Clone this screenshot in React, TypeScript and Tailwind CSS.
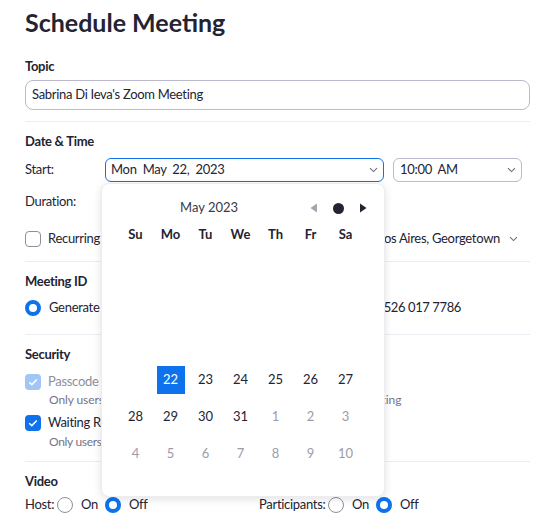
import React from "react";

const ink = "text-[#232333]";

function Chevron({ className = "" }: { className?: string }) {
    return (
        <svg width="9" height="6" viewBox="0 0 9 6" className={"shrink-0 " + className}>
            <path d="M1 1.2 L4.5 4.6 L8 1.2" fill="none" stroke="#6e6e7e" strokeWidth="1.1" />
        </svg>
    );
}

function Check({ checked, disabled }: { checked?: boolean; disabled?: boolean }) {
    if (!checked) return <span className="block w-4 h-4 rounded-[4px] border border-[#8f8f9c] bg-white shrink-0" />;
    return (
        <span className={"w-4 h-4 rounded-[4px] flex items-center justify-center shrink-0 " + (disabled ? "bg-[#9fc6f7]" : "bg-[#0e72ed]")}>
            <svg width="10" height="8" viewBox="0 0 10 8">
                <path d="M1.2 4.2 L3.8 6.6 L8.8 1.4" fill="none" stroke="white" strokeWidth="1.5" />
            </svg>
        </span>
    );
}

function Radio({ on, className = "" }: { on?: boolean; className?: string }) {
    return on
        ? <span className={"block w-4 h-4 rounded-full border-[4px] border-[#0e72ed] bg-white shrink-0 " + className} />
        : <span className={"block w-4 h-4 rounded-full border border-[#8f8f9c] bg-white shrink-0 " + className} />;
}

const Divider = ({ mt }: { mt: string }) => <div className={"h-px bg-[#ececf2] " + mt} />;

const weekdays = ["Su", "Mo", "Tu", "We", "Th", "Fr", "Sa"];

function Calendar() {
    const late = ["28", "29", "30", "31", "1", "2", "3"];
    const next = ["4", "5", "6", "7", "8", "9", "10"];
    const week22 = ["", "22", "23", "24", "25", "26", "27"];
    return (
        <div className="absolute left-[101px] top-[183px] w-[284px] h-[314px] bg-white rounded-lg border border-[#ededf1] shadow-[0_2px_8px_rgba(0,0,0,0.12)] tracking-normal">
            <div className="flex items-center h-6 mt-[12px]">
                <span className="ml-[78px] text-[13px] text-[#3a3a48]">May 2023</span>
                <div className="ml-auto mr-[17px] flex items-center gap-[15px]">
                    <svg width="8" height="10" viewBox="0 0 8 10"><path d="M7 0.5 L0.5 5 L7 9.5Z" fill="#a4a4ae" /></svg>
                    <span className="w-[11px] h-[11px] rounded-full bg-[#232333]" />
                    <svg width="8" height="10" viewBox="0 0 8 10"><path d="M1 0.5 L7.5 5 L1 9.5Z" fill="#232333" /></svg>
                </div>
            </div>
            <div className="grid grid-cols-[repeat(7,35px)] ml-[16px] mt-[3px]">
                {weekdays.map(d => (
                    <span key={d} className={"h-6 flex items-center justify-center text-[13px] font-bold " + ink}>{d}</span>
                ))}
            </div>
            <div className="grid grid-cols-[repeat(7,35px)] grid-rows-[repeat(6,37px)] ml-[16px] mt-[3px]">
                {Array.from({ length: 21 }).map((_, i) => <span key={"b" + i} />)}
                {week22.map((d, i) => (
                    <span key={"w" + i} className="flex items-center justify-center">
                        {d === "22"
                            ? <span className="w-7 h-7 bg-[#0e72ed] text-white text-[13px] flex items-center justify-center">22</span>
                            : <span className={"text-[13px] " + ink}>{d}</span>}
                    </span>
                ))}
                {late.map((d, i) => (
                    <span key={"l" + i} className={"flex items-center justify-center text-[13px] " + (i < 4 ? ink : "text-[#9c9ca8]")}>{d}</span>
                ))}
                {next.map(d => (
                    <span key={"n" + d} className="flex items-center justify-center text-[13px] text-[#9c9ca8]">{d}</span>
                ))}
            </div>
        </div>
    );
}

export default function App() {
    return (
        <div className={"relative w-[560px] h-[515px] overflow-hidden bg-white font-['Segoe_UI',Lato,sans-serif] tracking-[-0.3px] " + ink}>
            <div className="flex flex-col px-[25px] w-[555px] pt-[6px]">
                <h1 className="h-8 leading-8 text-[25px] font-bold tracking-normal">Schedule Meeting</h1>

                <p className="mt-[18px] h-5 leading-5 text-[13px] font-bold">Topic</p>
                <div className="mt-[4px] h-[30px] rounded-lg border border-[#babacc] flex items-center px-[6px] text-[13px]">
                    Sabrina Di Ieva's Zoom Meeting
                </div>
                <Divider mt="mt-[11px]" />

                <p className="mt-[9px] h-5 leading-5 text-[13px] font-bold">Date &amp; Time</p>
                <div className="mt-[7px] h-6 flex items-center text-[13px]">
                    <span className="w-[80px]">Start:</span>
                    <div className="w-[279px] h-6 rounded-md border border-[#0e72ed] flex items-center pl-[5px] pr-[5px]">
                        <span className="whitespace-pre">Mon  May  22,  2023</span>
                        <Chevron className="ml-auto" />
                    </div>
                    <div className="ml-[9px] w-[129px] h-6 rounded-md border border-[#babacc] flex items-center pl-[6px] pr-[5px]">
                        <span className="whitespace-pre">10:00  AM</span>
                        <Chevron className="ml-auto" />
                    </div>
                </div>
                <div className="mt-[10px] h-5 flex items-center text-[13px]">Duration:</div>
                <div className="mt-[19px] h-4 flex items-center text-[13px]">
                    <Check />
                    <span className="ml-[7px]">Recurring meeting</span>
                    <div className="ml-auto mr-[12px] flex items-center gap-[9px]">
                        <span>Time Zone: (GMT-3:00) Buenos Aires, Georgetown</span>
                        <Chevron />
                    </div>
                </div>
                <Divider mt="mt-[14px]" />

                <p className="mt-[9px] h-5 leading-5 text-[13px] font-bold">Meeting ID</p>
                <div className="mt-[9px] h-4 flex items-center text-[13px]">
                    <Radio on />
                    <span className="ml-[8px] w-[199px]">Generate Automatically</span>
                    <Radio />
                    <span className="ml-[8px] tracking-[-0.4px]">Personal Meeting ID 526 017 7786</span>
                </div>
                <Divider mt="mt-[18px]" />

                <p className="mt-[9px] h-5 leading-5 text-[13px] font-bold">Security</p>
                <div className="mt-[10px] h-4 flex items-center text-[13px]">
                    <Check checked disabled />
                    <span className="ml-[7px] text-[#8e8e9c]">Passcode</span>
                </div>
                <p className="mt-px ml-[24px] h-[18px] leading-[18px] text-[12px] text-[#747487] tracking-[-0.1px]">Only users who have the invite link or passcode can join the meeting</p>
                <div className="mt-[6px] h-4 flex items-center text-[13px]">
                    <Check checked />
                    <span className="ml-[7px]">Waiting Room</span>
                </div>
                <p className="mt-[2px] ml-[24px] h-[18px] leading-[18px] text-[12px] text-[#747487]">Only users admitted by the host can join</p>
                <Divider mt="mt-[10px]" />

                <p className="mt-[9px] h-5 leading-5 text-[13px] font-bold">Video</p>
                <div className="mt-[6px] h-4 flex items-center text-[13px]">
                    <div className="w-[234px] flex items-center">
                        <span className="w-[32px]">Host:</span>
                        <Radio />
                        <span className="ml-[8px] w-[16px]">On</span>
                        <Radio on className="ml-[8px]" />
                        <span className="ml-[8px]">Off</span>
                    </div>
                    <span className="w-[69px]">Participants:</span>
                    <Radio />
                    <span className="ml-[8px] w-[16px]">On</span>
                    <Radio on className="ml-[8px]" />
                    <span className="ml-[8px]">Off</span>
                </div>
            </div>
            <Calendar />
        </div>
    );
}
